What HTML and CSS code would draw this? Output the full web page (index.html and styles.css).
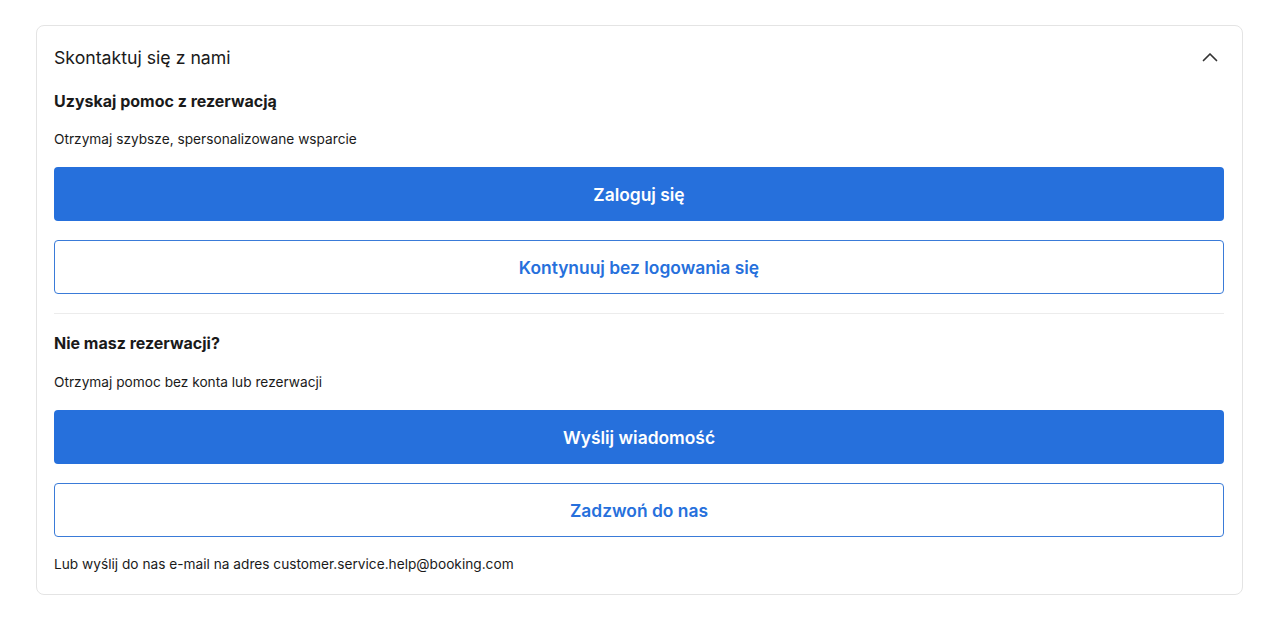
FILE: index.html
```html
<!DOCTYPE html>
<html lang="pl">
<head>
<meta charset="utf-8">
<link rel="stylesheet" href="styles.css">
</head>
<body>
<div class="page">
  <section class="card">
    <div class="card-head">
      <h2 class="card-title">Skontaktuj się z nami</h2>
      <svg class="chevron" width="20" height="20" viewBox="0 0 20 20" aria-hidden="true"><path d="M3.5 13.5 L10 7 L16.5 13.5" fill="none" stroke="#333" stroke-width="1.7" stroke-linecap="round" stroke-linejoin="round"/></svg>
    </div>
    <div class="group">
      <h3 class="group-title">Uzyskaj pomoc z rezerwacją</h3>
      <p class="group-text">Otrzymaj szybsze, spersonalizowane wsparcie</p>
      <div class="buttons">
        <button class="btn btn-primary">Zaloguj się</button>
        <button class="btn btn-outline">Kontynuuj bez logowania się</button>
      </div>
    </div>
    <hr class="divider">
    <div class="group group-second">
      <h3 class="group-title">Nie masz rezerwacji?</h3>
      <p class="group-text">Otrzymaj pomoc bez konta lub rezerwacji</p>
      <div class="buttons">
        <button class="btn btn-primary">Wyślij wiadomość</button>
        <button class="btn btn-outline">Zadzwoń do nas</button>
      </div>
    </div>
    <p class="email">Lub wyślij do nas e-mail na adres customer.service.help@booking.com</p>
  </section>
</div>
</body>
</html>
```

FILE: styles.css
```css
* { box-sizing: border-box; }
html, body { margin: 0; padding: 0; background: #fff; }
body { font-family: Inter, "Liberation Sans", Arial, sans-serif; color: #1a1a1a; }
.page { padding: 25px 37px 0 36px; }
.card {
  border: 1px solid #e4e4e4;
  border-radius: 8px;
  padding: 17px 18px 20px 17px;
}
.card-head {
  display: flex;
  align-items: center;
  justify-content: space-between;
  height: 28px;
}
.card-title { margin: 0; font-size: 17.7px; font-weight: 400; }
.chevron { margin-right: 4px; }
.group-title { margin: 19px 0 0; font-size: 16px; font-weight: 700; line-height: 22px; }
.group-text { margin: 17px 0 0; font-size: 13.7px; line-height: 20px; }
.group-second .group-title { margin-top: 18px; }
.group-second .group-text { margin-top: 18px; }
.buttons { display: flex; flex-direction: column; gap: 19px; margin-top: 18px; }
.btn {
  font-family: inherit;
  height: 54px;
  border-radius: 4px;
  font-size: 17.4px;
  font-weight: 600;
  cursor: pointer;
  width: 100%;
}
.btn-primary { background: #2670dc; color: #fff; border: none; }
.btn-outline { background: #fff; color: #2670dc; border: 1px solid #3a7bd8; }
.divider { border: 0; border-top: 1px solid #ececec; margin: 19px 0 0; }
.email { margin: 17px 0 0; font-size: 13.7px; line-height: 20px; }
```
